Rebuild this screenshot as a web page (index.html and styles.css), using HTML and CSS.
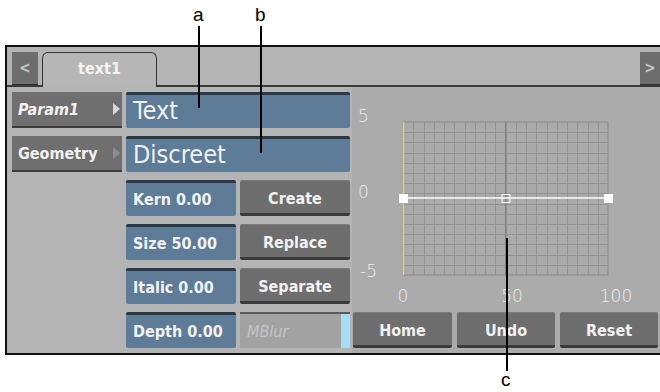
FILE: index.html
```html
<!DOCTYPE html>
<html>
<head>
    <title>Text Editor Panel</title>
    <link rel="stylesheet" href="styles.css">
</head>
<body>
    <div class="panel">
        <div class="tabbar">
            <div class="arrow">&lt;</div>
            <div class="tab">text1</div>
            <div class="tab-fill"></div>
            <div class="arrow arrow-right">&gt;</div>
        </div>

        <div class="editor">
            <div class="menu">
                <div class="menu-item active"><span class="param">Param1</span><span class="tri"></span></div>
                <div class="menu-item"><span>Geometry</span><span class="tri"></span></div>
            </div>

            <div class="fields">
                <div class="field wide big">Text</div>
                <div class="field wide big">Discreet</div>
                <div class="field">Kern 0.00</div>
                <div class="btn">Create</div>
                <div class="field">Size 50.00</div>
                <div class="btn">Replace</div>
                <div class="field">Italic 0.00</div>
                <div class="btn">Separate</div>
                <div class="field">Depth 0.00</div>
                <div class="mblur"><span>MBlur</span><span class="mblur-bar"></span></div>
            </div>

            <div class="curve">
                <svg class="graph" width="308" height="221" viewBox="0 0 308 221">
                    <rect x="51" y="35" width="205" height="153" fill="#aaaaaa" stroke="#8a8a8a" stroke-width="1"/>
                    <g id="grid" stroke="#939393" stroke-width="1"></g>
                    <line x1="153.5" y1="35" x2="153.5" y2="188" stroke="#7e7e7e" stroke-width="1"/>
                    <line x1="51.5" y1="35" x2="51.5" y2="188" stroke="#e8d070" stroke-width="1.5"/>
                    <line x1="51" y1="111" x2="256" y2="111" stroke="#ffffff" stroke-width="1.5"/>
                    <rect x="47" y="107" width="9" height="9" fill="#ffffff"/>
                    <rect x="252" y="107" width="9" height="9" fill="#ffffff"/>
                    <rect x="150" y="107.5" width="8" height="8" fill="none" stroke="#ffffff" stroke-width="1"/>
                    <text class="axis" x="6" y="35">5</text>
                    <text class="axis" x="6" y="111">0</text>
                    <text class="axis" x="8" y="190">-5</text>
                    <text class="axis" x="51" y="215" text-anchor="middle">0</text>
                    <text class="axis" x="160" y="215" text-anchor="middle">50</text>
                    <text class="axis" x="264" y="215" text-anchor="middle">100</text>
                </svg>
                <div class="curve-buttons">
                    <div class="btn">Home</div>
                    <div class="btn">Undo</div>
                    <div class="btn">Reset</div>
                </div>
            </div>
        </div>
    </div>

    <div class="callout callout-a">a</div>
    <div class="callout callout-b">b</div>
    <div class="callout callout-c">c</div>
    <div class="leader leader-a"></div>
    <div class="leader leader-b"></div>
    <div class="leader leader-c"></div>

    <script>
        const grid = document.getElementById('grid');
        const ns = 'http://www.w3.org/2000/svg';
        for (let i = 1; i < 20; i++) {
            const x = Math.round(51 + i * 205 / 20) + 0.5;
            const l = document.createElementNS(ns, 'line');
            l.setAttribute('x1', x); l.setAttribute('x2', x);
            l.setAttribute('y1', 35); l.setAttribute('y2', 188);
            grid.appendChild(l);
        }
        for (let j = 1; j < 15; j++) {
            const y = Math.round(35 + j * 153 / 15) + 0.5;
            const l = document.createElementNS(ns, 'line');
            l.setAttribute('x1', 51); l.setAttribute('x2', 256);
            l.setAttribute('y1', y); l.setAttribute('y2', y);
            grid.appendChild(l);
        }
    </script>
</body>
</html>
```

FILE: styles.css
```css
body {
    margin: 0;
    background: #ffffff;
    width: 660px;
    height: 392px;
    overflow: hidden;
    position: relative;
    font-family: 'DejaVu Sans Condensed', 'DejaVu Sans', sans-serif;
}

.panel {
    margin: 45px 0 0 5px;
    height: 306px;
    background: #b4b4b4;
    border-top: 2px solid #111;
    border-left: 2px solid #111;
    border-bottom: 2px solid #111;
}

/* tab strip */
.tabbar {
    display: flex;
    align-items: flex-end;
    height: 33px;
    padding: 5px 0 0 5px;
    border-bottom: 2px solid #3a3a3a;
}

.arrow {
    width: 26px;
    height: 33px;
    background: #6d6d6d;
    border-bottom: 1px solid #333;
    box-sizing: border-box;
    color: #c4c4c4;
    font-size: 15px;
    font-weight: bold;
    display: flex;
    align-items: center;
    justify-content: center;
}

.arrow-right {
    width: 20px;
}

.tab {
    width: 115px;
    height: 35px;
    margin: 0 0 -2px 4px;
    box-sizing: border-box;
    border: 1px solid #333;
    border-bottom: none;
    border-radius: 6px 6px 0 0;
    background: #b6b6b6;
    color: #f4f4f4;
    font-weight: bold;
    font-size: 16px;
    display: flex;
    align-items: center;
    justify-content: center;
    padding-bottom: 3px;
}

.tab-fill {
    flex: 1;
}

/* main area */
.editor {
    display: flex;
    height: 266px;
}

.menu {
    width: 110px;
    padding: 5px 0 0 5px;
    display: flex;
    flex-direction: column;
    gap: 8px;
}

.menu-item {
    height: 36px;
    box-sizing: border-box;
    background: #6f6f6f;
    border-bottom: 2px solid #3d3d3d;
    color: #f2f2f2;
    font-weight: bold;
    font-size: 16px;
    display: flex;
    align-items: center;
    justify-content: space-between;
    padding: 0 2px 0 6px;
}

.param {
    font-style: italic;
}

.tri {
    width: 0;
    height: 0;
    border-top: 6px solid transparent;
    border-bottom: 6px solid transparent;
    border-left: 7px solid #8c8c8c;
}

.menu-item.active .tri {
    border-left-color: #d8d8d8;
}

.fields {
    width: 224px;
    margin-left: 4px;
    padding-top: 5px;
    display: grid;
    grid-template-columns: 110px 110px;
    grid-auto-rows: 36px;
    column-gap: 4px;
    row-gap: 8px;
    align-content: start;
}

.field {
    box-sizing: border-box;
    background: #5e7b98;
    border-top: 3px solid #2b3846;
    border-radius: 2px;
    color: #f2f2f2;
    font-weight: bold;
    font-size: 16px;
    display: flex;
    align-items: center;
    padding: 0 0 0 7px;
}

.field.wide {
    grid-column: span 2;
}

.field.big {
    font-weight: normal;
    font-size: 25px;
    padding-bottom: 3px;
}

.btn {
    box-sizing: border-box;
    background: #6e6e6e;
    border-top: 1px solid #7a7a7a;
    border-bottom: 3px solid #3b3b3b;
    border-radius: 2px;
    color: #f2f2f2;
    font-weight: bold;
    font-size: 16px;
    display: flex;
    align-items: center;
    justify-content: center;
    padding-top: 2px;
}

.mblur {
    box-sizing: border-box;
    background: #a2a2a2;
    border-top: 2px solid #5a5a5a;
    color: #c4c4c4;
    font-style: italic;
    font-size: 16px;
    display: flex;
    align-items: center;
    justify-content: space-between;
    padding-left: 7px;
}

.mblur-bar {
    width: 9px;
    align-self: stretch;
    background: #a6dcf4;
}

/* curve editor */
.curve {
    margin-left: 2px;
    flex: 1;
    display: flex;
    flex-direction: column;
    gap: 4px;
    background: #ababab;
}

.graph {
    display: block;
}

.axis {
    font-family: 'DejaVu Sans', sans-serif;
    font-weight: 200;
    font-size: 17px;
    fill: #ececec;
}

.curve-buttons {
    display: flex;
    gap: 5px;
    padding-left: 1px;
    height: 36px;
}

.curve-buttons .btn {
    width: 98px;
}

.curve-buttons .btn:first-child {
    width: 99px;
}

/* callout letters */
.callout {
    position: absolute;
    font-family: 'Liberation Sans', Arial, sans-serif;
    font-size: 19px;
    line-height: 16px;
    color: #000;
}

.callout-a { left: 193px; top: 7px; }
.callout-b { left: 255px; top: 7px; }
.callout-c { left: 501px; top: 372px; }

.leader {
    position: absolute;
    width: 2px;
    background: #000;
}

.leader-a { left: 198px; top: 26px; height: 82px; }
.leader-b { left: 260px; top: 26px; height: 127px; }
.leader-c { left: 506px; top: 238px; height: 133px; }
```
